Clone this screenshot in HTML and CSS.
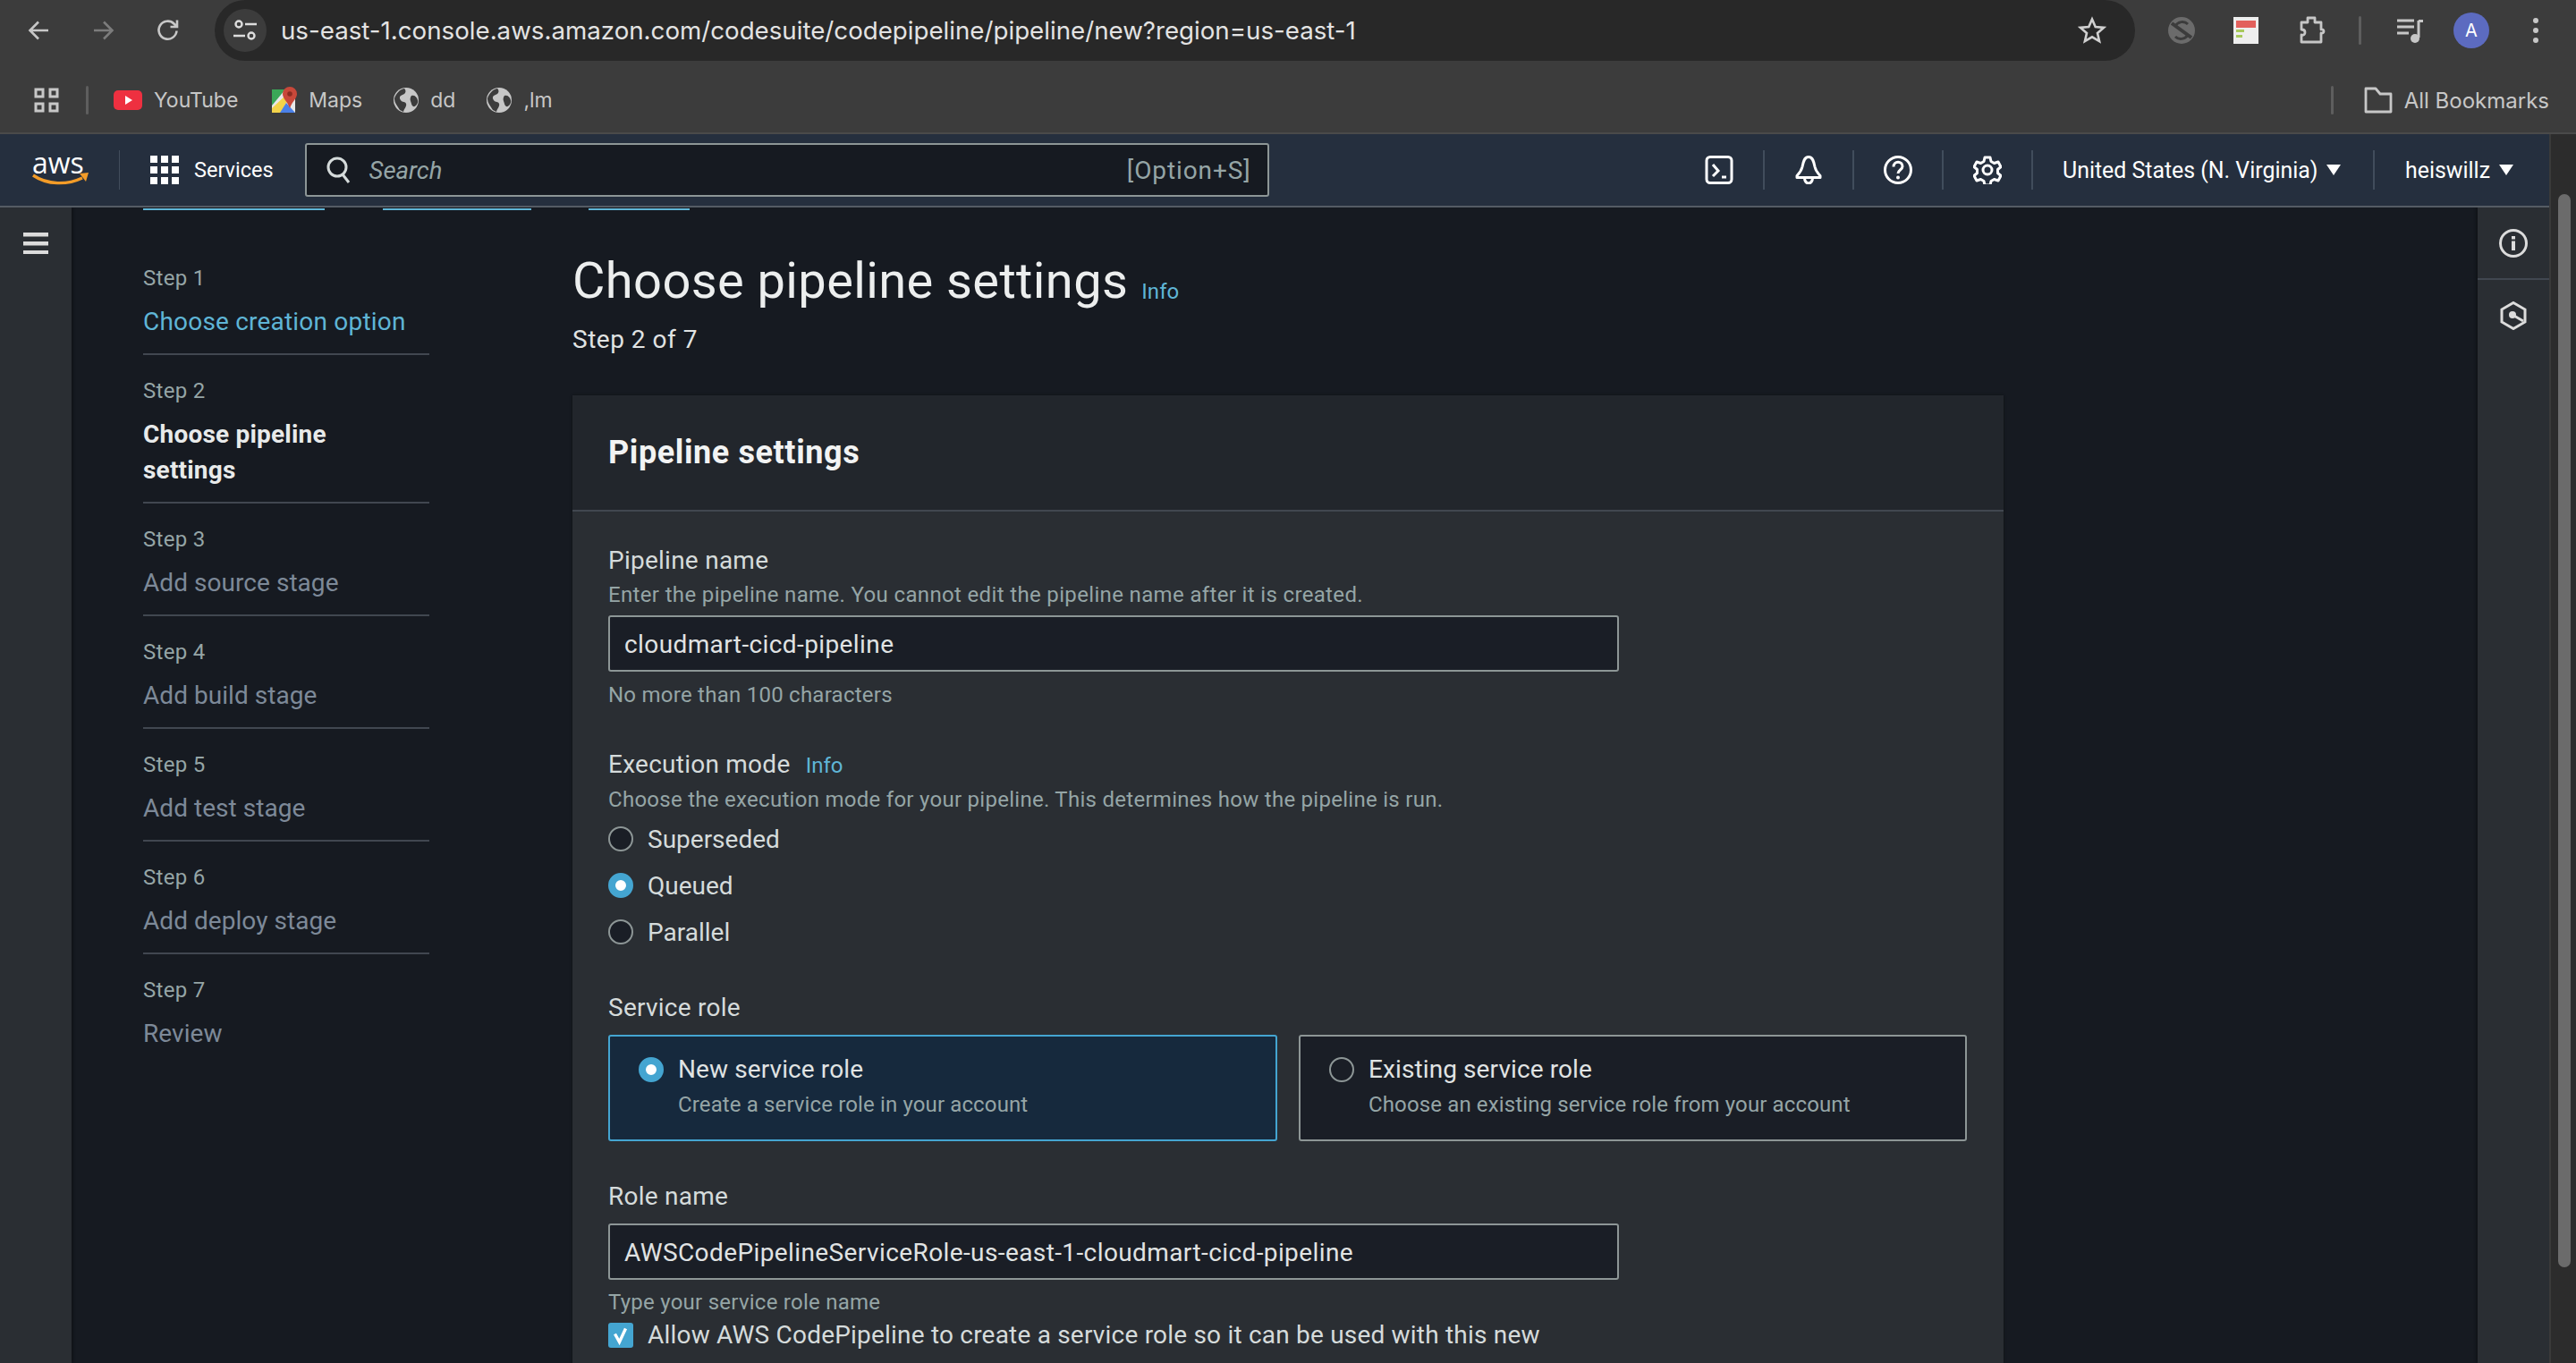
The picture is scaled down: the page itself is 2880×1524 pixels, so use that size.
FILE: index.html
```html
<!DOCTYPE html>
<html lang="en">
<head>
    <meta charset="UTF-8">
    <title>Create new pipeline | CodePipeline</title>
    <link rel="stylesheet" href="styles.css">
</head>
<body>
    <!-- browser chrome -->
    <div class="chrome-bar">
        <div class="chrome-nav">
            <svg class="chrome-icon" viewBox="0 0 32 32"><path d="M26 16H6M15 6.500 5.500 16l9.500 9.500" fill="none" stroke="#c7c7c7" stroke-width="2.600"/></svg>
            <svg class="chrome-icon" viewBox="0 0 32 32"><path d="M5 16h20M16 6.500l9.500 9.500-9.500 9.500" fill="none" stroke="#7c7c7c" stroke-width="2.600"/></svg>
            <svg class="chrome-icon" viewBox="0 0 32 32"><path d="M25.500 16.500a10 10 0 1 1-3-8l3 3M26 4.500v7.500h-7.500" fill="none" stroke="#c7c7c7" stroke-width="2.600"/></svg>
        </div>
        <div class="url-pill">
            <span class="tune-btn">
                <svg viewBox="0 0 32 32" width="32" height="32"><circle cx="9" cy="9" r="3.500" fill="none" stroke="#ddd" stroke-width="2.400"/><circle cx="23" cy="22" r="3.500" fill="none" stroke="#ddd" stroke-width="2.400"/><path d="M16 9h13M3 22h13" stroke="#ddd" stroke-width="2.400"/></svg>
            </span>
            <span class="url-text">us-east-1.console.aws.amazon.com/codesuite/codepipeline/pipeline/new?region=us-east-1</span>
            <svg class="star" viewBox="0 0 32 32" width="32" height="32"><path d="M16 3.500l3.700 8.600 9.300.8-7 6.100 2.100 9.100-8.100-4.800-8.100 4.800 2.100-9.100-7-6.100 9.300-.8z" fill="none" stroke="#d0d0d0" stroke-width="2.600"/></svg>
        </div>
        <div class="chrome-tools">
            <svg class="ext ext-gray" viewBox="0 0 32 32" width="32" height="32"><circle cx="16" cy="16" r="15" fill="#6b6b6b"/><path d="M5 8l22 16" stroke="#3c3c3c" stroke-width="4"/><path d="M9 11c3-5 10-6 14-2M23 21c-3 5-10 6-14 2" fill="none" stroke="#3c3c3c" stroke-width="3"/></svg>
            <svg class="ext ext-note" viewBox="0 0 30 32" width="30" height="32"><rect x="1" y="1" width="28" height="30" fill="#eee"/><rect x="4" y="5" width="22" height="8" fill="#e2605c"/><rect x="4" y="15" width="9" height="3" fill="#a8c95c"/><rect x="4" y="21" width="7" height="3" fill="#a8c95c"/></svg>
            <svg class="ext ext-puzzle" viewBox="0 0 32 34" width="32" height="34"><path d="M4 8h7V3h8v5h7v8c4-1 4 5 0 4v10H4v-8c3 1 4-1 4-3s-1-3-4-3z" fill="none" stroke="#c7c7c7" stroke-width="2.800" stroke-linejoin="round"/></svg>
            <span class="chrome-sep sep-tall"></span>
            <svg class="ext ext-media" viewBox="0 0 32 32" width="32" height="32"><path d="M1 5h19M1 12h19M1 19h13" stroke="#c7c7c7" stroke-width="3"/><path d="M25 5v19" stroke="#c7c7c7" stroke-width="3"/><path d="M25 4h5v3h-5z" fill="#c7c7c7"/><circle cx="21" cy="25" r="5" fill="#c7c7c7"/></svg>
            <span class="avatar">A</span>
            <svg class="ext ext-dots" viewBox="0 0 8 32" width="8" height="32"><circle cx="4" cy="5" r="3" fill="#c7c7c7"/><circle cx="4" cy="16" r="3" fill="#c7c7c7"/><circle cx="4" cy="27" r="3" fill="#c7c7c7"/></svg>
        </div>
    </div>

    <div class="bookmarks">
        <svg class="apps-icon" viewBox="0 0 28 28" width="28" height="28"><path d="M2 2h8v8H2zM18 2h8v8h-8zM2 18h8v8H2zM18 18h8v8h-8z" fill="none" stroke="#c7c7c7" stroke-width="3"/></svg>
        <span class="chrome-sep"></span>
        <a class="bookmark bm-youtube">
            <svg viewBox="0 0 32 22" width="32" height="22"><rect width="32" height="22" rx="5" fill="#ee3040"/><path d="M13 6l8 5-8 5z" fill="#fff"/></svg>
            YouTube
        </a>
        <a class="bookmark bm-maps">
            <svg viewBox="0 0 28 30" width="28" height="30"><rect y="3" width="26" height="26" fill="#e8e8e8"/><path d="M0 3h15L0 21z" fill="#3aa757"/><path d="M0 29V24L16 9l3 4-9 16z" fill="#f3d34a"/><path d="M9 29l7-11 10 11z" fill="#4a80e8"/><path d="M20 0a8 8 0 0 1 8 8c0 5-5 8-8 16-3-8-8-11-8-16a8 8 0 0 1 8-8z" fill="#c8483a"/><circle cx="20" cy="8" r="2.800" fill="#8a2c22"/></svg>
            Maps
        </a>
        <a class="bookmark bm-dd">
            <svg viewBox="0 0 28 28" width="28" height="28"><circle cx="14" cy="14" r="14" fill="#c7c7c7"/><path d="M12 1c3 3 1 6-2 7s-4 3-2 6 5 1 6 4-2 5-3 9l-4-2C4 20 1 17 1 12 3 6 7 2 12 1zM20 9c3-1 6 1 7 5s-3 8-5 7-2-4-3-6 0-5 1-6z" fill="#3c3c3c"/></svg>
            dd
        </a>
        <a class="bookmark bm-lm">
            <svg viewBox="0 0 28 28" width="28" height="28"><circle cx="14" cy="14" r="14" fill="#c7c7c7"/><path d="M12 1c3 3 1 6-2 7s-4 3-2 6 5 1 6 4-2 5-3 9l-4-2C4 20 1 17 1 12 3 6 7 2 12 1zM20 9c3-1 6 1 7 5s-3 8-5 7-2-4-3-6 0-5 1-6z" fill="#3c3c3c"/></svg>
            ,lm
        </a>
        <span class="bookmarks-right">
            <span class="chrome-sep"></span>
            <a class="bookmark all-bookmarks">
                <svg viewBox="0 0 32 30" width="32" height="30"><path d="M2 2h11l5 6h12v20H2z" fill="none" stroke="#c7c7c7" stroke-width="2.800" stroke-linejoin="round"/></svg>
                All Bookmarks
            </a>
        </span>
    </div>

    <div class="page-row">
        <div class="console">
            <!-- aws top nav -->
            <nav class="topnav">
                <div class="aws-logo">
                    <span class="aws-word">aws</span>
                    <svg viewBox="0 0 66 16" width="66" height="16">
                        <path d="M1 2c16 11 38 11 55 3" fill="none" stroke="#f39c28" stroke-width="3.400"/>
                        <path d="M53 0l10-1-3 10z" fill="#f39c28"/>
                    </svg>
                </div>
                <span class="nav-sep nav-sep-logo"></span>
                <svg class="services-icon" viewBox="0 0 32 32" width="32" height="32"><path d="M0 0h8v8H0zM12 0h8v8h-8zM24 0h8v8h-8zM0 12h8v8H0zM12 12h8v8h-8zM24 12h8v8h-8zM0 24h8v8H0zM12 24h8v8h-8zM24 24h8v8h-8z" fill="#fff"/></svg>
                <span class="services-label">Services</span>
                <div class="search-box">
                    <svg viewBox="0 0 28 32" width="28" height="32"><circle cx="12" cy="13" r="10" fill="none" stroke="#d5dbdb" stroke-width="3"/><path d="M18 21l7 9" stroke="#d5dbdb" stroke-width="3"/></svg>
                    <span class="search-text">Search</span>
                    <span class="search-key">[Option+S]</span>
                </div>
                <div class="nav-right">
                    <span class="nav-btn">
                        <svg viewBox="0 0 32 32" width="32" height="32"><rect x="2" y="1.500" width="28" height="29" rx="4" fill="none" stroke="#fff" stroke-width="3"/><path d="M9 10l6 7-6 6" fill="none" stroke="#fff" stroke-width="3"/><path d="M19 24h5" stroke="#fff" stroke-width="3"/></svg>
                    </span>
                    <span class="nav-btn">
                        <svg viewBox="0 0 32 32" width="32" height="32"><path d="M16 1.500c-5 0-6 6-7 11-1 4-3 7-6 10v2h26v-2c-3-3-5-6-6-10-1-5-2-11-7-11z" fill="none" stroke="#fff" stroke-width="3" stroke-linejoin="round"/><path d="M11.500 25a4.500 6 0 0 0 9 0" fill="none" stroke="#fff" stroke-width="3"/></svg>
                    </span>
                    <span class="nav-btn">
                        <svg viewBox="0 0 32 32" width="32" height="32"><circle cx="16" cy="16" r="14.500" fill="none" stroke="#fff" stroke-width="3"/><path d="M11 12.500c0-7 10-7 10-.5 0 4-5 4-5 8" fill="none" stroke="#fff" stroke-width="3"/><circle cx="16" cy="24.500" r="2" fill="#fff"/></svg>
                    </span>
                    <span class="nav-btn">
                        <svg viewBox="0 0 32 32" width="32" height="32"><path d="M13 2h6l1 4.500 3.500 2 4.500-1.500 3 5.500-3.500 3v4l3.500 3-3 5.500-4.500-1.500-3.500 2-1 4.500h-6l-1-4.500-3.500-2-4.500 1.500-3-5.500 3.500-3v-4l-3.500-3 3-5.500 4.500 1.500 3.500-2z" fill="none" stroke="#fff" stroke-width="3" stroke-linejoin="round"/><circle cx="16" cy="16" r="5" fill="none" stroke="#fff" stroke-width="3"/></svg>
                    </span>
                    <span class="nav-menu nav-region">United States (N. Virginia)<i class="caret"></i></span>
                    <span class="nav-menu nav-user">heiswillz<i class="caret"></i></span>
                </div>
            </nav>

            <div class="layout">
                <aside class="rail-left">
                    <svg viewBox="0 0 28 24" width="28" height="24"><path d="M0 0h28v4.500H0zM0 10h28v4.500H0zM0 20h28v4H0z" fill="#dcdcdc"/></svg>
                </aside>

                <aside class="wizard">
                    <div class="crumbs">
                        <span class="crumb crumb-a"></span>
                        <span class="crumb crumb-b"></span>
                        <span class="crumb crumb-c"></span>
                    </div>
                    <ol class="steps">
                        <li><small>Step 1</small><a class="link">Choose creation option</a></li>
                        <li><small>Step 2</small><strong>Choose pipeline settings</strong></li>
                        <li><small>Step 3</small><span>Add source stage</span></li>
                        <li><small>Step 4</small><span>Add build stage</span></li>
                        <li><small>Step 5</small><span>Add test stage</span></li>
                        <li><small>Step 6</small><span>Add deploy stage</span></li>
                        <li><small>Step 7</small><span>Review</span></li>
                    </ol>
                </aside>

                <main class="content">
                    <div class="title-row">
                        <h1>Choose pipeline settings</h1>
                        <a class="info">Info</a>
                    </div>
                    <p class="step-count">Step 2 of 7</p>

                    <section class="card">
                        <h2>Pipeline settings</h2>
                        <div class="card-body">
                            <div class="field field-name">
                                <label>Pipeline name</label>
                                <p class="desc">Enter the pipeline name. You cannot edit the pipeline name after it is created.</p>
                                <div class="input">cloudmart-cicd-pipeline</div>
                                <p class="hint">No more than 100 characters</p>
                            </div>

                            <div class="field field-mode">
                                <label>Execution mode <a class="info info-small">Info</a></label>
                                <p class="desc">Choose the execution mode for your pipeline. This determines how the pipeline is run.</p>
                                <div class="radio-row"><i class="radio"></i>Superseded</div>
                                <div class="radio-row"><i class="radio on"></i>Queued</div>
                                <div class="radio-row"><i class="radio"></i>Parallel</div>
                            </div>

                            <div class="field field-role">
                                <label>Service role</label>
                                <div class="tiles">
                                    <div class="tile selected">
                                        <i class="radio on"></i>
                                        <div>
                                            <div class="tile-title">New service role</div>
                                            <div class="tile-desc">Create a service role in your account</div>
                                        </div>
                                    </div>
                                    <div class="tile">
                                        <i class="radio"></i>
                                        <div>
                                            <div class="tile-title">Existing service role</div>
                                            <div class="tile-desc">Choose an existing service role from your account</div>
                                        </div>
                                    </div>
                                </div>
                            </div>

                            <div class="field field-rolename">
                                <label>Role name</label>
                                <div class="input">AWSCodePipelineServiceRole-us-east-1-cloudmart-cicd-pipeline</div>
                                <p class="hint">Type your service role name</p>
                                <div class="check-row">
                                    <i class="checkbox">
                                        <svg viewBox="0 0 28 28" width="28" height="28"><path d="M7.500 12.500l5 9 7-15" fill="none" stroke="#fff" stroke-width="3.400"/></svg>
                                    </i>
                                    Allow AWS CodePipeline to create a service role so it can be used with this new
                                </div>
                            </div>
                        </div>
                    </section>
                </main>

                <aside class="rail-right">
                    <div class="rail-btn rail-info">
                        <svg viewBox="0 0 32 32" width="32" height="32"><circle cx="16" cy="16" r="14.500" fill="none" stroke="#dcdcdc" stroke-width="3"/><path d="M14 13.500h4V24h-4zM14 8h4v3.500h-4z" fill="#dcdcdc"/></svg>
                    </div>
                    <div class="rail-btn">
                        <svg viewBox="0 0 30 32" width="30" height="32"><path d="M15 1.500l13 7.500v14l-13 7.500L2 23V9z" fill="none" stroke="#dcdcdc" stroke-width="3"/><circle cx="14" cy="15" r="4" fill="#dcdcdc"/><path d="M14 15l12 7" stroke="#dcdcdc" stroke-width="3"/></svg>
                    </div>
                </aside>
            </div>
        </div>
        <div class="scrollbar"><span class="thumb"></span></div>
    </div>
</body>
</html>
```

FILE: styles.css
```css
* {
    box-sizing: border-box;
}

html, body {
    height: 100%;
}

body {
    margin: 0;
    overflow: hidden;
    display: flex;
    flex-direction: column;
    font-family: Roboto, "Liberation Sans", sans-serif;
    background-color: #3c3c3c;
    color: #d5dbdb;
}

p, h1, h2 {
    margin: 0;
}

/* browser chrome */
.chrome-bar {
    height: 74px;
    display: flex;
    font-family: Inter, Roboto, sans-serif;
}

.chrome-nav {
    width: 240px;
    height: 68px;
    padding-left: 28px;
    display: flex;
    align-items: center;
    gap: 40px;
}

.chrome-icon {
    width: 32px;
    height: 32px;
}

.url-pill {
    width: 2147px;
    height: 68px;
    padding: 0 32px 0 10px;
    display: flex;
    align-items: center;
    background-color: #282828;
    border-radius: 34px;
}

.tune-btn {
    width: 48px;
    height: 48px;
    display: flex;
    align-items: center;
    justify-content: center;
    background-color: #3c3c3c;
    border-radius: 50%;
}

.url-text {
    margin-left: 16px;
    flex: 1;
    font-size: 27.7px;
    color: #e3e3e3;
}

.chrome-tools {
    height: 68px;
    padding-left: 36px;
    display: flex;
    align-items: center;
}

.ext-note {
    margin-left: 41px;
}

.ext-puzzle {
    margin-left: 43px;
}

.chrome-sep {
    display: block;
    width: 3px;
    height: 32px;
    background-color: #5e5e5e;
    border-radius: 2px;
}

.sep-tall {
    margin-left: 36px;
}

.ext-media {
    margin-left: 39px;
}

.avatar {
    width: 40px;
    height: 40px;
    margin-left: 32px;
    display: flex;
    align-items: center;
    justify-content: center;
    background-color: #5c6bc0;
    color: #fff;
    border-radius: 50%;
    font-size: 20px;
}

.ext-dots {
    margin-left: 48px;
}

.bookmarks {
    height: 76px;
    padding-left: 38px;
    padding-top: 2px;
    display: flex;
    align-items: center;
    font-family: Inter, Roboto, sans-serif;
    border-bottom: 2px solid #4a4a4a;
}

.bookmarks > .chrome-sep {
    margin-left: 30px;
}

.bookmark {
    display: flex;
    align-items: center;
    gap: 13px;
    font-size: 23px;
    color: #c7c7c7;
}

.all-bookmarks {
    font-size: 24px;
}

.bm-youtube {
    margin-left: 28px;
}

.bm-maps {
    margin-left: 38px;
}

.bm-dd, .bm-lm {
    margin-left: 35px;
}

.bookmarks-right {
    margin-left: auto;
    padding-right: 30px;
    display: flex;
    align-items: center;
    gap: 34px;
}

/* console */
.page-row {
    flex: 1;
    min-height: 0;
    display: flex;
}

.console {
    flex: 1;
    min-width: 0;
    display: flex;
    flex-direction: column;
}

.scrollbar {
    width: 30px;
    padding: 67px 6px 0 8px;
    background-color: #2c2c2c;
    border-left: 2px solid #3a3a3a;
}

.thumb {
    display: block;
    height: 1200px;
    background-color: #6b6b6b;
    border-radius: 8px;
}

.topnav {
    height: 82px;
    padding-left: 36px;
    display: flex;
    align-items: center;
    background-color: #252f3e;
    border-bottom: 2px solid #545b64;
}

.aws-logo {
    flex: none;
    width: 66px;
}

.aws-logo svg {
    display: block;
    overflow: visible;
}

.aws-word {
    display: block;
    font-family: "Open Sans", sans-serif;
    font-size: 32px;
    line-height: 24px;
    color: #fff;
}

.nav-sep-logo {
    width: 1px;
    height: 44px;
    margin-left: 31px;
    background-color: #414d5c;
}

.services-icon {
    margin-left: 34px;
}

.services-label {
    margin-left: 17px;
    font-size: 23.5px;
    color: #fff;
}

.search-box {
    width: 1078px;
    height: 60px;
    margin-left: 35px;
    padding: 0 18px 0 22px;
    display: flex;
    align-items: center;
    background-color: #161a21;
    border: 2px solid #8d9696;
    border-radius: 3px;
}

.search-text {
    margin-left: 20px;
    flex: 1;
    font-size: 27.5px;
    font-style: italic;
    color: #95a5a6;
}

.search-key {
    font-size: 28px;
    letter-spacing: 0.9px;
    color: #95a5a6;
}

.nav-right {
    margin-left: auto;
    display: flex;
    align-items: center;
    height: 44px;
}

.nav-btn {
    width: 100px;
    height: 44px;
    display: flex;
    align-items: center;
    justify-content: center;
    border-right: 2px solid #414d5c;
}

.nav-menu {
    height: 44px;
    display: flex;
    align-items: center;
    font-size: 24.9px;
    color: #fff;
}

.nav-region {
    width: 382px;
    padding-left: 33px;
    border-right: 2px solid #414d5c;
}

.nav-user {
    width: 195px;
    padding-left: 34px;
}

.caret {
    width: 0;
    height: 0;
    margin-left: 10px;
    border-left: 8px solid transparent;
    border-right: 8px solid transparent;
    border-top: 12px solid #fff;
}

.layout {
    flex: 1;
    min-height: 0;
    display: flex;
    overflow: hidden;
    background-color: #161a21;
}

.rail-left {
    width: 80px;
    padding: 28px 0 0 26px;
    background-color: #2a2e33;
    box-shadow: 2px 0 3px rgba(0, 0, 0, 0.3);
}

.rail-left svg, .rail-btn svg {
    display: block;
}

.wizard {
    width: 560px;
    padding-left: 80px;
}

.crumbs {
    height: 39px;
    padding-top: 1px;
    display: flex;
    align-items: flex-start;
}

.crumb {
    flex: none;
    height: 2px;
    background-color: #5fb5d6;
}

.crumb-a {
    width: 203px;
}

.crumb-b {
    width: 166px;
    margin-left: 65px;
}

.crumb-c {
    width: 113px;
    margin-left: 64px;
}

.steps {
    width: 320px;
    margin: 0;
    padding: 0;
    list-style: none;
}

.steps li {
    padding: 22px 0 15px;
    border-bottom: 2px solid #414750;
}

.steps li:last-child {
    border-bottom: none;
}

.steps small {
    display: block;
    font-size: 24px;
    line-height: 36px;
    letter-spacing: 0.3px;
    color: #95a5a6;
}

.steps a, .steps strong, .steps span {
    display: block;
    margin-top: 11px;
    font-size: 28px;
    line-height: 40px;
    letter-spacing: 0.2px;
}

.steps span {
    letter-spacing: 0.05px;
    color: #7d8998;
}

.steps strong {
    max-width: 290px;
    color: #e8eaea;
}

.link, .info {
    color: #5fb5d6;
}

.content {
    width: 1600px;
    padding-top: 48px;
}

.title-row {
    display: flex;
    align-items: center;
    gap: 15px;
}

h1 {
    font-size: 56px;
    line-height: 68px;
    font-weight: 400;
    letter-spacing: 0.4px;
    color: #eceeee;
}

.info {
    font-size: 24px;
}

.title-row .info {
    margin-top: 24px;
}

.step-count {
    margin-top: 16px;
    font-size: 28px;
    line-height: 32px;
    letter-spacing: 0.5px;
    color: #e0e3e3;
}

.card {
    margin-top: 46px;
    background-color: #2a2e33;
    box-shadow: 0 0 3px rgba(0, 0, 0, 0.4);
}

h2 {
    height: 130px;
    padding: 0 40px;
    display: flex;
    align-items: center;
    font-size: 36px;
    font-weight: 700;
    letter-spacing: 0.6px;
    color: #f2f3f3;
    background-color: #22262c;
    border-bottom: 2px solid #414750;
}

.card-body {
    padding: 35px 40px;
}

label {
    display: block;
    font-size: 28px;
    line-height: 40px;
    letter-spacing: 0.25px;
    color: #d5dbdb;
}

.desc {
    font-size: 24px;
    line-height: 36px;
    letter-spacing: 0.35px;
    color: #95a5a6;
}

.field-mode .desc {
    letter-spacing: 0.28px;
}

.hint {
    margin-top: 8px;
    font-size: 24px;
    line-height: 36px;
    letter-spacing: 0.25px;
    color: #95a5a6;
}

.input {
    width: 1130px;
    height: 63px;
    padding: 2px 16px 0;
    display: flex;
    align-items: center;
    font-size: 28px;
    letter-spacing: 0.4px;
    color: #e0e3e3;
    background-color: #1a1e26;
    border: 2px solid #8d9696;
    border-radius: 3px;
}

.field-name .input {
    margin-top: 5px;
}

.field-mode {
    margin-top: 40px;
}

.info-small {
    margin-left: 10px;
    letter-spacing: 0;
    font-size: 24px;
}

.radio-row {
    height: 52px;
    display: flex;
    align-items: center;
    font-size: 28px;
    color: #d5dbdb;
}

.radio {
    flex: none;
    width: 28px;
    height: 28px;
    margin-right: 16px;
    background-color: #1a1e26;
    border: 2px solid #8d9696;
    border-radius: 50%;
}

.radio.on {
    background-color: #fff;
    border: 8px solid #44a5d1;
}

.field-role {
    margin-top: 39px;
}

.tiles {
    margin-top: 10px;
    display: flex;
    gap: 24px;
}

.tile {
    width: 747px;
    height: 119px;
    padding: 21px 0 0 32px;
    display: flex;
    background-color: #1a1e26;
    border: 2px solid #8d9696;
    border-radius: 3px;
}

.tile.selected {
    width: 748px;
    background-color: #16293d;
    border-color: #44a5d1;
}

.tile .radio {
    margin-top: 2px;
    margin-right: 16px;
}

.tile-title {
    font-size: 28px;
    line-height: 32px;
    letter-spacing: 0.1px;
    color: #e0e3e3;
}

.tile-desc {
    margin-top: 7px;
    font-size: 24px;
    line-height: 32px;
    letter-spacing: 0.13px;
    color: #95a5a6;
}

.field-rolename {
    margin-top: 42px;
}

.field-rolename .input {
    margin-top: 10px;
}

.field-rolename .hint {
    margin-top: 7px;
}

.check-row {
    margin-top: 3px;
    display: flex;
    align-items: center;
    font-size: 28px;
    line-height: 32px;
    letter-spacing: 0.2px;
    color: #d5dbdb;
}

.checkbox {
    width: 28px;
    height: 28px;
    margin-right: 16px;
    background-color: #44a5d1;
    border-radius: 3px;
}

.checkbox svg {
    display: block;
}

.rail-right {
    width: 80px;
    margin-left: auto;
    background-color: #2a2e33;
    box-shadow: -2px 0 3px rgba(0, 0, 0, 0.3);
}

.rail-btn {
    height: 81px;
    padding-top: 24px;
    display: flex;
    justify-content: center;
}

.rail-info {
    border-bottom: 2px solid #414750;
}
```
